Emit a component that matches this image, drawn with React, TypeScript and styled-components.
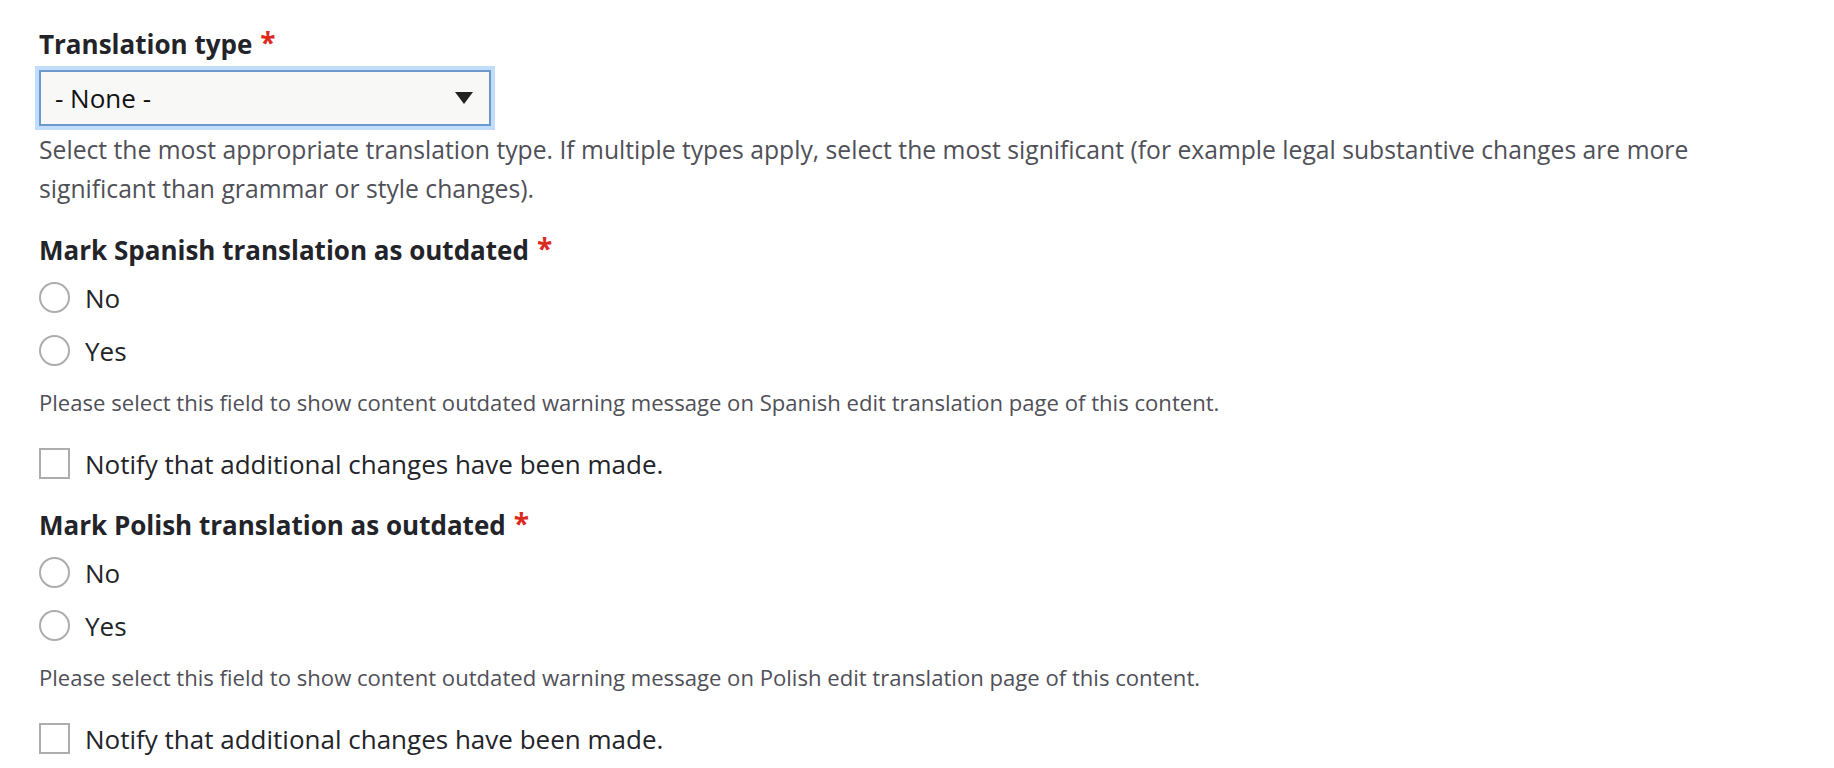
import React, { FC } from 'react';
import styled, { createGlobalStyle } from 'styled-components';

const GlobalStyle = createGlobalStyle`
  body {
    margin: 0;
    background: #ffffff;
    font-family: "Open Sans", "Liberation Sans", sans-serif;
    color: #222330;
  }
`;

const Page = styled.form`
  padding: 29px 39px 0;
  display: flex;
  flex-direction: column;
`;

const Field = styled.div<{ $gap?: number }>`
  display: flex;
  flex-direction: column;
  margin-bottom: ${(p) => p.$gap ?? 0}px;
`;

const Label = styled.div`
  font-size: 26px;
  font-weight: 700;
  line-height: 30px;
  color: #232429;
  display: flex;
  align-items: flex-start;
  gap: 8px;
`;

const Required = styled.span`
  color: #dc2a1e;
  font-size: 28px;
  line-height: 26px;
`;

const SelectBox = styled.div`
  margin-top: 11px;
  width: 452px;
  height: 56px;
  box-sizing: border-box;
  border: 2px solid #6c98cc;
  box-shadow: 0 0 0 4px #c2dcfb;
  background: #f8f8f7;
  display: flex;
  align-items: center;
  justify-content: space-between;
  padding: 0 16px 0 14px;
  font-size: 26px;
  color: #111;
`;

const Caret = styled.span`
  width: 0;
  height: 0;
  border-left: 9px solid transparent;
  border-right: 9px solid transparent;
  border-top: 12px solid #222;
`;

const Description = styled.div`
  margin-top: 4px;
  font-size: 24.7px;
  line-height: 39px;
  color: #4f5058;
  max-width: 1700px;
`;

const Options = styled.div`
  margin-top: 6px;
  display: flex;
  flex-direction: column;
`;

const OptionRow = styled.label`
  height: 53px;
  display: flex;
  align-items: center;
  gap: 15px;
  font-size: 26px;
  color: #232429;
`;

const RadioCircle = styled.span`
  width: 31px;
  height: 31px;
  box-sizing: border-box;
  border: 2px solid #adadad;
  border-radius: 50%;
  flex: none;
`;

const CheckSquare = styled.span`
  width: 31px;
  height: 31px;
  box-sizing: border-box;
  border: 2px solid #adadad;
  flex: none;
`;

const Help = styled.div`
  margin-top: 10px;
  font-size: 22.1px;
  line-height: 30px;
  color: #4f5058;
`;

const CheckRow = styled(OptionRow)`
  margin-top: 20px;
`;

interface OutdatedProps {
  language: string;
  gap?: number;
}

const OutdatedField: FC<OutdatedProps> = ({ language, gap }) => (
  <Field $gap={gap}>
    <Label>
      Mark {language} translation as outdated <Required>*</Required>
    </Label>
    <Options>
      <OptionRow>
        <RadioCircle />
        No
      </OptionRow>
      <OptionRow>
        <RadioCircle />
        Yes
      </OptionRow>
    </Options>
    <Help>
      Please select this field to show content outdated warning message on {language} edit
      translation page of this content.
    </Help>
    <CheckRow>
      <CheckSquare />
      Notify that additional changes have been made.
    </CheckRow>
  </Field>
);

const App: FC = () => (
  <>
    <GlobalStyle />
    <Page>
      <Field $gap={27}>
        <Label>
          Translation type <Required>*</Required>
        </Label>
        <SelectBox>
          <span>- None -</span>
          <Caret />
        </SelectBox>
        <Description>
          Select the most appropriate translation type. If multiple types apply, select the most
          significant (for example legal substantive changes are more significant than grammar or
          style changes).
        </Description>
      </Field>
      <OutdatedField language="Spanish" gap={20} />
      <OutdatedField language="Polish" />
    </Page>
  </>
);

export default App;
